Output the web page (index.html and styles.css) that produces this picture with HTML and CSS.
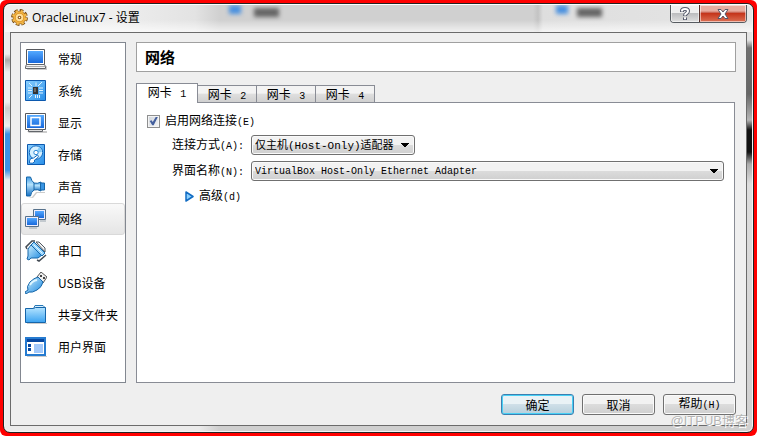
FILE: index.html
```html
<!DOCTYPE html>
<html lang="zh-CN">
<head>
<meta charset="utf-8">
<meta name="viewport" content="width=device-width, initial-scale=1">
<title>OracleLinux7 - 设置</title>
<link rel="stylesheet" href="styles.css">
</head>
<body>
<div class="frame">
<main class="window">
  <header class="titlebar">
    <svg class="app-icon" viewBox="0 0 16 16" aria-hidden="true">
      <circle cx="8" cy="8" r="6.3" fill="none" stroke="#70450f" stroke-width="3.200" stroke-dasharray="3.200 1.750"/>
      <circle cx="8" cy="8" r="6" fill="#f3b541" stroke="#a8691c" stroke-width=".7"/>
      <circle cx="8" cy="8" r="6.2" fill="none" stroke="#f3b94d" stroke-width="2" stroke-dasharray="2.200 2.750" stroke-dashoffset="-.5"/>
      <circle cx="8" cy="8" r="4" fill="#ffdf9a" stroke="#e09a2c"/>
      <circle cx="8" cy="8" r="1.7" fill="#8b571c"/><circle cx="8" cy="8" r=".7" fill="#fff"/>
    </svg>
    <h1 class="title">OracleLinux7 - 设置</h1>
    <div class="backdrop" aria-hidden="true"><i class="blob blob-blue"></i><i class="blob blob-text"></i><i class="blob blob-blue blob-second"></i><i class="blob blob-text blob-text-second"></i></div>
    <div class="caption-buttons">
      <button class="caption help" type="button" aria-label="帮助">
        <svg viewBox="0 0 12 14"><path d="M3 5V3.800Q3 2 6 2t3 2q0 1.500-1.500 2.400T6 9M6 10.500v2.500" fill="none" stroke="#55596b" stroke-width="4"/><path d="M3 4.500V3.800Q3 2 6 2t3 2q0 1.500-1.500 2.400T6 8.500M6 10.300v2" fill="none" stroke="#fff" stroke-width="2"/></svg>
      </button>
      <button class="caption close" type="button" aria-label="关闭">
        <svg viewBox="0 0 12 10"><path d="M1 .5h3L6 3 8 .5h3L8 5l3 4.500H8L6 7 4 9.500H1L4 5z" fill="#fff" stroke="#555769"/></svg>
      </button>
    </div>
  </header>

  <div class="client">
    <nav class="sidebar" aria-label="设置类别">
      <a class="item" href="#general"><svg viewBox="0 0 22 22"><path d="M3 18h19v4H2z" fill="#ccc"/><path d="M1.500 1.500h18v15h-18z" fill="#fff" stroke="#56595e"/><path d="M3 3h15v12H3z" fill="url(#screen)"/><path d="M1.500 16.500h18l1 2v2H.5v-2z" fill="#f5f5f5" stroke="#62656a"/><path d="M1 18.500h19" stroke="#aaa"/></svg>常规</a>
      <a class="item" href="#system"><svg viewBox="0 0 22 22"><path d="M.5.500h20v20H.5z" fill="url(#tile)" stroke="#0c59ae"/><path d="M8 7h5v7H8z" fill="#333"/><path d="M9 8h2v4H9z" fill="#666"/><path d="M3 8h4M3 10.500h4M3 13h4M14 8h4M14 10.500h4M14 13h4M11 2.500V6M13 6l4-4M7 15l-3 3M10.500 15v3M12.500 15v3M14.500 15v3M7 6 4 3" stroke="#dff3ff"/></svg>系统</a>
      <a class="item" href="#display"><svg viewBox="0 0 22 22"><path d="M2 19h20v2H4z" fill="#ccc"/><path d="M.5 1.500h20v16H.5z" fill="#fff" stroke="#56595e"/><path d="M2 3h17v13H2z" fill="url(#screen)"/><path d="M6 5.500h9v8H6z" fill="none" stroke="#fff" stroke-width="1.500"/><path d="M3.500 17.500h14v2h-14z" fill="#ddd" stroke="#62656a"/></svg>显示</a>
      <a class="item" href="#storage"><svg viewBox="0 0 22 22"><path d="M2.500.500h17v20h-17z" fill="url(#tile)" stroke="#0c59ae"/><circle cx="11" cy="8.500" r="6.700" fill="#d5f0ff" stroke="#136abf"/><path d="M11 8.500 14 3q3 2 3 5z" fill="#86cbf8"/><circle cx="11" cy="8.500" r="2.200" fill="#fff" stroke="#2d87d6"/><path d="M4.500 17q0-3 4-3l4-3q2 1 0 3l-3 2v2q-2 2-5 1z" fill="#fff" stroke="#136abf"/></svg>存储</a>
      <a class="item" href="#audio"><svg viewBox="0 0 22 22"><path d="M3 21h4l4-5h9v1h-8l-4 5z" fill="#ccc"/><path d="M8 7q5 1 8-1v9q-3-2-8-1z" fill="url(#speaker)" stroke="#1767a9"/><path d="M1.500 1h4q1 4 3.500 6v7q-3 2-3.500 6h-4z" fill="url(#speaker)" stroke="#1767a9"/><path d="M15.500 7h4v7h-4z" fill="#3894e3" stroke="#1767a9"/></svg>声音</a>
      <a class="item selected" href="#network" aria-current="page"><svg viewBox="0 0 22 22"><path d="M8.500 1.500h12v10h-12z" fill="#eef" stroke="#56718b"/><path d="M10 3h9v7h-9z" fill="url(#screen)"/><path d="M15 13h6" stroke="#9aa6b0"/><path d="M.5 8.500h13v10H.5z" fill="#eef" stroke="#56718b"/><path d="M2 10h10v7H2z" fill="url(#screen)"/><path d="M4 20h8" stroke="#9aa6b0"/></svg>网络</a>
      <a class="item" href="#serial"><svg viewBox="0 0 22 22"><path d="M2 9 1 7l6-6h3M12 20l2 1 7-6" fill="none" stroke="#444c54" stroke-width="1.500"/><path d="M6 5 3 9v7l-1 3 2 1 2-2h7l4-3z" fill="url(#glass)" stroke="#1767a9"/><path d="m9 2 11 11-3 3L6 5z" fill="#8fd0fa" stroke="#1767a9"/><path d="M11 2h3l6 6v4z" fill="#f0f2f4" stroke="#505860"/><path d="m8.500 4.500 9 9" stroke="#e9f8ff"/></svg>串口</a>
      <a class="item" href="#usb"><svg viewBox="0 0 22 22"><path d="m12 5 4-5 6 5-4 6z" fill="#eee" stroke="#555"/><path d="M15 3h2v2h-2zm3 2h2v2h-2z" fill="#444"/><path d="M3 18q-2-3 2-8 4-4 8-5l5 5q-1 5-6 8-5 3-8 2l-3 2-1-2z" fill="url(#glass)" stroke="#1767a9"/><path d="M5 13q2-4 7-5" fill="none" stroke="#dff6ff" stroke-width="2"/></svg>USB设备</a>
      <a class="item" href="#shared"><svg viewBox="0 0 22 22"><path d="M2 19h20v1H2z" fill="#ccc"/><path d="M8.500 4.500 10 1.500h8l2 2v3h-12z" fill="#d7efff" stroke="#2778b6"/><path d="M.5 4.500h8l2-1h10v15H.5z" fill="url(#folder)" stroke="#1565aa"/></svg>共享文件夹</a>
      <a class="item" href="#ui"><svg viewBox="0 0 22 22"><path d="M2 20h20v1H2z" fill="#ccc"/><path d="M1 2h19v17H1z" fill="#fff" stroke="#267bd0" stroke-width="2"/><path d="M2 3h17v3H2zM3 8h3v3H3zm0 4h3v3H3z" fill="#0747a0"/><path d="M9 8h9v9H9z" fill="#a3c9fa"/></svg>用户界面</a>
    </nav>

    <section class="page" aria-labelledby="page-title">
      <h2 class="page-title" id="page-title">网络</h2>
      <div class="tabs" role="tablist">
        <button class="tab active" type="button" role="tab" aria-selected="true">网卡 <span class="mono">&nbsp;1</span></button>
        <button class="tab" type="button" role="tab" aria-selected="false">网卡 <span class="mono">&nbsp;2</span></button>
        <button class="tab" type="button" role="tab" aria-selected="false">网卡 <span class="mono">&nbsp;3</span></button>
        <button class="tab" type="button" role="tab" aria-selected="false">网卡 <span class="mono">&nbsp;4</span></button>
      </div>
      <div class="panel" role="tabpanel">
        <div class="check-row"><input class="check" id="enable" type="checkbox" checked><label for="enable">启用网络连接<span class="mono">(E)</span></label></div>
        <div class="form">
          <label class="label" for="mode">连接方式<span class="mono">(A):</span></label>
          <select class="combo combo-mode" id="mode"><option>仅主机(Host-Only)适配器</option></select>
          <label class="label" for="name">界面名称<span class="mono">(N):</span></label>
          <select class="combo combo-name" id="name"><option>VirtualBox Host-Only Ethernet Adapter</option></select>
        </div>
        <button class="advanced" type="button"><svg viewBox="0 0 9 11"><path d="m1 1 7 4.500L1 10z" fill="#8bd0ff" stroke="#126cc3" stroke-width="1.500" stroke-linejoin="round"/></svg><span>高级<span class="mono">(d)</span></span></button>
      </div>
    </section>

    <footer class="actions">
      <button class="button primary" type="button">确定</button>
      <button class="button" type="button">取消</button>
      <button class="button" type="button">帮助<span class="mono">(H)</span></button>
    </footer>
  </div>
</main>
<div class="watermark">@ITPUB博客</div>
</div>
<svg class="defs" aria-hidden="true"><defs>
  <linearGradient id="screen" x2="0" y2="1"><stop stop-color="#54a9ff"/><stop offset="1" stop-color="#1869dc"/></linearGradient>
  <linearGradient id="tile" x2="1" y2="1"><stop stop-color="#8bd0ff"/><stop offset="1" stop-color="#278ee9"/></linearGradient>
  <linearGradient id="glass" x2="1" y2="1"><stop stop-color="#d4f3ff"/><stop offset="1" stop-color="#1685df"/></linearGradient>
  <linearGradient id="speaker" x2="0" y2="1"><stop stop-color="#3f9ae4"/><stop offset=".4" stop-color="#b5e2fc"/><stop offset="1" stop-color="#1470c4"/></linearGradient>
  <linearGradient id="folder" x2="0" y2="1"><stop stop-color="#b5e4ff"/><stop offset="1" stop-color="#3ba3f1"/></linearGradient>
</defs></svg>
</body>
</html>
```
FILE: styles.css
```css
* { box-sizing: border-box; }
body {
  margin: 0;
  background: #fff;
  color: #000;
  font: 12px/16px "Noto Sans CJK SC", sans-serif;
}
button, select, input { margin: 0; color: inherit; font: inherit; }
.defs { position: absolute; width: 0; height: 0; }
.mono { font-family: "Liberation Mono", monospace; font-size: 10px; }

.frame {
  position: relative;
  display: flex;
  min-height: 100vh;
  padding: 3px;
  border-radius: 6px;
  background: #f00;
}
.window {
  flex: 1;
  display: flex;
  flex-direction: column;
  min-width: 0;
  padding: 0 6px 6px;
  border: 1px solid #222;
  border-radius: 7px;
  box-shadow: inset 0 0 0 1px #f4f4f4;
  background:
    linear-gradient(#e4e4e4 0 36px, #707070 44px, #666 90px, #b5b5b5 116px, #111 126px 148px, #aaa 160px, #ddd 180px, #d0d0d0) right / 6px 100% no-repeat,
    linear-gradient(#ededed 0 50px, #aaa 56px, #eee 68px 98px, #ccc 104px, #eee 122px, #3d91e4 130px 166px, #ececec 176px) left / 6px 100% no-repeat,
    linear-gradient(90deg, #ebebeb 0 195px, #cfcfcf 215px);
}

.titlebar {
  position: relative;
  display: flex;
  align-items: center;
  height: 28px;
  margin: 0 -5px;
  padding: 0 5px 2px 6px;
  border-top: 1px solid #fff;
  border-radius: 6px 6px 0 0;
  background: linear-gradient(transparent 55%, rgba(255,255,255,.7)), linear-gradient(90deg, #eee 0 110px, #e3e3e3 190px, #d0d0d0 215px 528px, #c3c3c3 533px, #dedede 538px, #e5e5e5);
}
.app-icon { width: 17px; height: 17px; margin-right: 4px; }
.title {
  margin: 0;
  font: 12px/16px "Open Sans", "Noto Sans CJK SC", sans-serif;
}
.backdrop { position: absolute; inset: 0; overflow: hidden; }
.blob { position: absolute; top: 0; left: 224px; width: 12px; height: 9px; filter: blur(2px); background: #4b91df; }
.blob-text { top: 3px; left: 249px; width: 25px; height: 9px; background: #666; }
.blob-second { left: 551px; }
.blob-text-second { left: 572px; }
.caption-buttons {
  position: relative;
  align-self: flex-start;
  display: flex;
  margin-left: auto;
  border: 1px solid #565b60;
  border-top: 0;
  border-radius: 0 0 4px 4px;
  overflow: hidden;
}
.caption {
  display: grid;
  place-items: center;
  width: 28px;
  height: 17px;
  padding: 0;
  border: 0;
  box-shadow: inset 0 0 0 1px rgba(255,255,255,.55);
}
.help { background: linear-gradient(#eee 0 45%, #bcbdbf 50%, #e0e0e0); }
.close { width: 47px; border-left: 1px solid #56312b; background: linear-gradient(#e8ada0 0 35%, #c96150 45%, #c5351b 50%, #dc7054); }
.help svg { width: 12px; height: 14px; }
.close svg { width: 12px; height: 10px; }

.client {
  flex: 1;
  display: grid;
  grid-template-columns: 106px minmax(0, 1fr);
  grid-template-rows: 1fr auto;
  gap: 11px 10px;
  padding: 9px 10px 10px 9px;
  border: 1px solid #6b6b6b;
  background: #efefef;
}
.sidebar { border: 1px solid #828790; background: #fff; }
.item {
  display: flex;
  align-items: center;
  gap: 11px;
  height: 32px;
  padding: 0 3px;
  border: 1px solid transparent;
  border-radius: 3px;
  color: inherit;
  text-decoration: none;
  white-space: nowrap;
}
.item svg { flex: none; width: 22px; height: 22px; }
.selected { border-color: #d9d9d9; background: linear-gradient(#f9f9f9, #e5e5e5); }

.page { display: flex; flex-direction: column; min-width: 0; }
.page-title {
  margin: 0 0 11px;
  padding: 4px 8px;
  border: 1px solid #a0a0a0;
  background: #fff;
  font-size: 15px;
  line-height: 20px;
}
.tabs { display: flex; align-items: flex-end; }
.tab {
  width: 60px;
  height: 17px;
  padding: 0;
  border: 1px solid #898c95;
  border-bottom: 0;
  background: linear-gradient(#f3f3f3 0 45%, #dfdfdf 50%, #d0d0d0);
  line-height: 16px;
  white-space: nowrap;
}
.tab + .tab { margin-left: -1px; }
.tab.active { position: relative; width: 62px; height: 20px; margin-bottom: -1px; background: #fff; }
.panel { flex: 1; margin-right: 1px; padding: 10px; border: 1px solid #898c95; background: #fff; }
.check-row { display: flex; align-items: center; gap: 5px; height: 16px; }
.check {
  appearance: none;
  display: grid;
  place-items: center;
  width: 13px;
  height: 13px;
  border: 1px solid #8e8f8f;
  background: linear-gradient(135deg, #cfd5dc, #f6f6f6);
  box-shadow: inset 0 0 0 1px #f4f4f4;
}
.check:checked::after {
  content: "";
  width: 9px;
  height: 9px;
  background: #445f9d;
  clip-path: polygon(8% 50%, 28% 42%, 42% 62%, 78% 0, 98% 6%, 52% 98%, 36% 98%);
}
.form {
  display: grid;
  grid-template-columns: 73px minmax(0, 1fr);
  gap: 6px;
  align-items: center;
  margin-top: 6px;
  padding-left: 25px;
}
.label { white-space: nowrap; }
.combo {
  appearance: none;
  height: 20px;
  padding: 1px 20px 0 3px;
  border: 1px solid #707070;
  border-radius: 3px;
  box-shadow: inset 0 0 0 1px #fafafa;
  background:
    conic-gradient(from 315deg at 50% 4px, #000 90deg, transparent 0) right 5px top 7px / 8px 4px no-repeat,
    linear-gradient(#f2f2f2 0 50%, #dcdcdc 50%, #cfcfcf);
}
.combo-mode { justify-self: start; font: 11px/16px "Liberation Mono", "Noto Sans CJK SC", monospace; }
.combo-name { width: 100%; font: 10px/16px "Liberation Mono", monospace; }
.advanced {
  display: flex;
  align-items: center;
  gap: 5px;
  margin: 6px 0 0 38px;
  padding: 0;
  border: 0;
  background: none;
}
.advanced svg { width: 9px; height: 11px; }

.actions { grid-column: 2; display: flex; justify-content: flex-end; gap: 8px; }
.button {
  width: 73px;
  height: 21px;
  padding: 0;
  border: 1px solid #707070;
  border-radius: 3px;
  box-shadow: inset 0 0 0 1px #fafafa;
  background: linear-gradient(#f2f2f2 0 50%, #dcdcdc 50%, #cfcfcf);
  line-height: 16px;
}
.primary { border-color: #3c7fb1; box-shadow: inset 0 0 0 1px #48d0f5; background: linear-gradient(#eaf2f6 0 50%, #cfdfe8 50%, #b7cfdc); }
.watermark {
  position: absolute;
  right: 9px;
  bottom: 7px;
  color: rgba(125,125,125,.55);
  font: 13px/16px "Liberation Sans", "Noto Sans CJK SC", sans-serif;
  text-shadow: 1px 1px #fff;
  pointer-events: none;
}
```
